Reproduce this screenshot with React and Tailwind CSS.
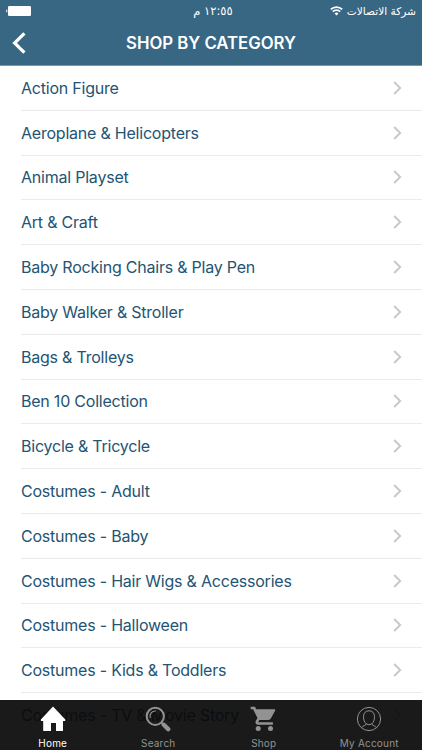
import React, { useState } from "react";

const categories = [
  "Action Figure",
  "Aeroplane & Helicopters",
  "Animal Playset",
  "Art & Craft",
  "Baby Rocking Chairs & Play Pen",
  "Baby Walker & Stroller",
  "Bags & Trolleys",
  "Ben 10 Collection",
  "Bicycle & Tricycle",
  "Costumes - Adult",
  "Costumes - Baby",
  "Costumes - Hair Wigs & Accessories",
  "Costumes - Halloween",
  "Costumes - Kids & Toddlers",
  "Costumes - TV & Movie Story",
];

const HomeIcon = () => (
  <svg className="h-[26px] w-[26px]" viewBox="0 0 26 26" fill="currentColor">
    <path d="M13 0.5 25.3 13.4V15H23V25H16V17H11V25H3.2V15H0.9V13.4Z" />
  </svg>
);

const SearchIcon = () => (
  <svg className="h-[26px] w-[26px]" viewBox="0 0 26 26" fill="none">
    <circle cx="10.3" cy="10.3" r="8.6" stroke="currentColor" strokeWidth="2" />
    <path
      d="M5.2 11.5A5.2 5.2 0 0 1 10.5 5"
      stroke="currentColor"
      strokeWidth="1.1"
      strokeLinecap="round"
    />
    <path d="m16.2 16.2 2.5 2.5" stroke="currentColor" strokeWidth="2" />
    <path
      d="m18.8 18.8 4.4 4.3"
      stroke="currentColor"
      strokeWidth="4.4"
      strokeLinecap="round"
    />
  </svg>
);

const CartIcon = () => (
  <svg
    className="mr-[2px] h-[26px] w-[26px]"
    viewBox="0 0 26 26"
    fill="currentColor"
  >
    <path d="M0.7 0.8H5L6.2 3.3H24.2C25 3.3 25.5 4 25.1 4.8L20.8 12.6C20.3 13.5 19.5 14 18.5 14H9.3L8.2 16.2H22.9V18.7H7.9C6 18.7 4.9 16.8 5.8 15.1L7.5 12.1 3.1 3.2H0.7Z" />
    <circle cx="8.2" cy="22.5" r="2.5" />
    <circle cx="20.5" cy="22.5" r="2.5" />
  </svg>
);

const AccountIcon = () => (
  <svg
    className="h-[26px] w-[26px]"
    viewBox="0 0 26 26"
    fill="none"
    stroke="currentColor"
    strokeWidth="1"
  >
    <circle cx="13" cy="13" r="11.6" />
    <path d="M5.5 21.7C6.6 19.4 10.2 19.9 10.2 17.8C8.2 16.2 7.5 13.5 7.5 10.7C7.5 7 9.6 4.8 13 4.8S18.5 7 18.5 10.7C18.5 13.5 17.8 16.2 15.8 17.8C15.8 19.9 19.4 19.4 20.5 21.7M10.2 17.8Q13 19.8 15.8 17.8" />
  </svg>
);

const tabs = [
  { name: "Home", icon: HomeIcon },
  { name: "Search", icon: SearchIcon },
  { name: "Shop", icon: CartIcon },
  { name: "My Account", icon: AccountIcon },
];

const StatusBar = () => (
  <div className="grid h-[22px] grid-cols-3 items-center px-[6px] font-['DejaVu_Sans',sans-serif] text-[10.6px] text-white">
    <svg className="h-[10px] w-[25px]" viewBox="0 0 25 10" fill="currentColor">
      <rect x="2" y="0" width="23" height="10" rx="1.2" />
      <path d="M1.2 3.2v3.6A2 2 0 0 1 1.2 3.2Z" />
    </svg>
    <span dir="rtl" className="pt-[2px] pl-[4px] text-center text-[11.5px]">
      ١٢:٥٥ م
    </span>
    <div dir="rtl" className="flex items-center gap-1 whitespace-nowrap">
      <span className="pt-px">شركة الاتصالات</span>
      <svg
        className="h-[10px] w-[13px] shrink-0"
        viewBox="0 0 13 10"
        fill="none"
        stroke="currentColor"
        strokeWidth="1.7"
      >
        <path d="M0.8 3.4A8.2 8.2 0 0 1 12.2 3.4M2.8 5.6A5.3 5.3 0 0 1 10.2 5.6" />
        <path
          d="M6.5 9.5 4.6 7.5A2.8 2.8 0 0 1 8.4 7.5Z"
          fill="currentColor"
          stroke="none"
        />
      </svg>
    </div>
  </div>
);

const App = () => {
  const [active, setActive] = useState("Home");

  return (
    <div className="relative h-[750px] w-[422px] overflow-hidden bg-white font-['Inter',sans-serif]">
      <header className="h-[66px] border-b border-[#7998ab] bg-[#386784]">
        <StatusBar />
        <div className="grid h-[43px] grid-cols-[50px_1fr_50px] items-center">
          <button aria-label="Back" className="pb-px pl-[12px] text-white">
            <svg
              className="h-[22px] w-[14px]"
              viewBox="0 0 14 22"
              fill="none"
              stroke="currentColor"
              strokeWidth="3.2"
            >
              <path d="M12.4 1.4 2.6 11l9.8 9.6" />
            </svg>
          </button>
          <h1 className="text-center text-[16.8px] font-semibold tracking-[-0.04px] whitespace-nowrap text-white">
            SHOP BY CATEGORY
          </h1>
        </div>
      </header>

      <ul>
        {categories.map((name) => (
          <li
            key={name}
            className="ml-[21px] flex h-[44.8px] items-center justify-between border-b border-[#ebebed] pr-5"
          >
            <span className="text-[16px] tracking-[-0.22px] text-[#235473]">
              {name}
            </span>
            <svg
              className="h-[14px] w-[9px]"
              viewBox="0 0 9 14"
              fill="none"
              stroke="#c7c7cc"
              strokeWidth="1.9"
            >
              <path d="m1.2 1 6 6-6 6" />
            </svg>
          </li>
        ))}
      </ul>

      <nav className="absolute inset-x-0 bottom-0 grid h-[50px] grid-cols-4 bg-[#090909]/93">
        {tabs.map(({ name, icon: Icon }) => (
          <button
            key={name}
            onClick={() => setActive(name)}
            className={`flex flex-col items-center ${
              active === name ? "text-white" : "text-[#929292]"
            }`}
          >
            <span className="mt-[6px] flex h-[26px] items-center">
              <Icon />
            </span>
            <span className="mt-[4px] text-[10px] leading-[14px] tracking-[0.2px]">
              {name}
            </span>
          </button>
        ))}
      </nav>
    </div>
  );
};

export default App;
